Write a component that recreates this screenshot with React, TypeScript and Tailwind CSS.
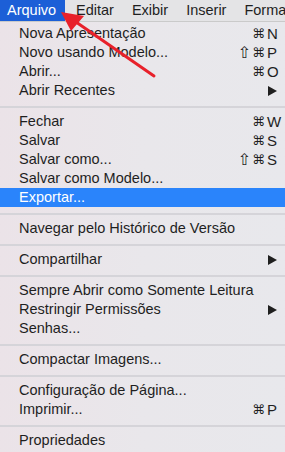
import React from "react";

type Item =
  | { kind: "sep" }
  | {
      kind: "item";
      label: string;
      shift?: boolean;
      keyChar?: string;
      sub?: boolean;
      active?: boolean;
    };

const items: Item[] = [
  { kind: "item", label: "Nova Apresentação", keyChar: "N" },
  { kind: "item", label: "Novo usando Modelo...", shift: true, keyChar: "P" },
  { kind: "item", label: "Abrir...", keyChar: "O" },
  { kind: "item", label: "Abrir Recentes", sub: true },
  { kind: "sep" },
  { kind: "item", label: "Fechar", keyChar: "W" },
  { kind: "item", label: "Salvar", keyChar: "S" },
  { kind: "item", label: "Salvar como...", shift: true, keyChar: "S" },
  { kind: "item", label: "Salvar como Modelo..." },
  { kind: "item", label: "Exportar...", active: true },
  { kind: "sep" },
  { kind: "item", label: "Navegar pelo Histórico de Versão" },
  { kind: "sep" },
  { kind: "item", label: "Compartilhar", sub: true },
  { kind: "sep" },
  { kind: "item", label: "Sempre Abrir como Somente Leitura" },
  { kind: "item", label: "Restringir Permissões", sub: true },
  { kind: "item", label: "Senhas..." },
  { kind: "sep" },
  { kind: "item", label: "Compactar Imagens..." },
  { kind: "sep" },
  { kind: "item", label: "Configuração de Página..." },
  { kind: "item", label: "Imprimir...", keyChar: "P" },
  { kind: "sep" },
  { kind: "item", label: "Propriedades" },
];

const SubArrow = () => (
  <svg width="9" height="10" viewBox="0 0 9 10" className="fill-[#1f1f1f]">
    <path d="M0 0 L9 5 L0 10 Z" />
  </svg>
);

export default function App() {
  return (
    <div
      className="relative w-[285px] h-[452px] overflow-hidden text-[14.5px] text-[#1f1f1f]"
      style={{ fontFamily: '"Liberation Sans", Arial, sans-serif' }}
    >
      <div className="flex h-[22px] bg-[#e4e4e6] border-b border-[#cacaca] leading-[21px]">
        <div className="w-[65px] shrink-0 pl-[7px] bg-[#1c5fd7] text-white">
          Arquivo
        </div>
        <div className="flex gap-[18px] ml-[11px] whitespace-nowrap">
          <span>Editar</span>
          <span>Exibir</span>
          <span>Inserir</span>
          <span>Formatar</span>
        </div>
      </div>

      <div className="pt-[2px] h-[430px] bg-gradient-to-r from-[#ebe3e8] via-[#e9e7eb] to-[#e8e8ec]">
        {items.map((it, i) =>
          it.kind === "sep" ? (
            <div key={i} className="h-[12px] pt-[6px]">
              <div className="h-[2px] bg-[#d5d4d9]" />
            </div>
          ) : (
            <div
              key={i}
              className={`flex items-center h-[19px] pl-[19px] ${
                it.active ? "bg-[#2a84fb] text-white" : ""
              }`}
            >
              <span className="flex-1 whitespace-nowrap">{it.label}</span>
              {it.keyChar && (
                <div className="flex items-center w-[60px] shrink-0">
                  <span
                    className="flex-1 flex items-center justify-end gap-[1px] pr-[2px]"
                    style={{ fontFamily: '"DejaVu Sans", sans-serif' }}
                  >
                    {it.shift && <span className="text-[16px] leading-[19px]">⇧</span>}
                    <span className="text-[13px] leading-[19px]">⌘</span>
                  </span>
                  <span className="w-[18px] text-[15px] leading-[19px]">{it.keyChar}</span>
                </div>
              )}
              {it.sub && (
                <div className="w-[17px] shrink-0 flex items-center">
                  <SubArrow />
                </div>
              )}
            </div>
          )
        )}
      </div>

      <svg
        className="absolute left-0 top-0 pointer-events-none"
        width="285"
        height="120"
        viewBox="0 0 285 120"
      >
        <line x1="154" y1="76" x2="76" y2="22" stroke="#e8212b" strokeWidth="3" strokeLinecap="round" />
        <path d="M61 12 L84 16 L71 31 Z" fill="#e8212b" />
      </svg>
    </div>
  );
}
